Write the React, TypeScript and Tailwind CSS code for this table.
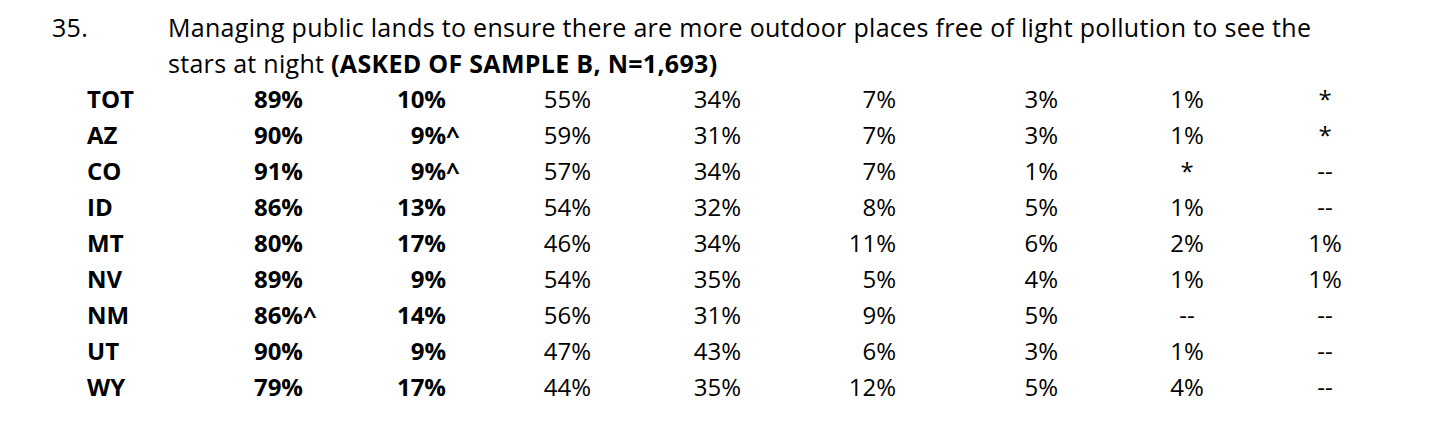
import React from "react";

type Row = { label: string; v: string[] };

const rows: Row[] = [
  { label: "TOT", v: ["89%", "10%", "55%", "34%", "7%", "3%", "1%", "*"] },
  { label: "AZ", v: ["90%", "9%^", "59%", "31%", "7%", "3%", "1%", "*"] },
  { label: "CO", v: ["91%", "9%^", "57%", "34%", "7%", "1%", "*", "--"] },
  { label: "ID", v: ["86%", "13%", "54%", "32%", "8%", "5%", "1%", "--"] },
  { label: "MT", v: ["80%", "17%", "46%", "34%", "11%", "6%", "2%", "1%"] },
  { label: "NV", v: ["89%", "9%", "54%", "35%", "5%", "4%", "1%", "1%"] },
  { label: "NM", v: ["86%^", "14%", "56%", "31%", "9%", "5%", "--", "--"] },
  { label: "UT", v: ["90%", "9%", "47%", "43%", "6%", "3%", "1%", "--"] },
  { label: "WY", v: ["79%", "17%", "44%", "35%", "12%", "5%", "4%", "--"] },
];

function Val({ text }: { text: string }) {
  if (text.endsWith("^")) {
    return (
      <span>
        {text.slice(0, -1)}
        <span className="inline-block w-0">^</span>
      </span>
    );
  }
  return <span>{text}</span>;
}

export default function App() {
  return (
    <div
      className="w-[1432px] h-[425px] bg-white text-black pt-[9px] text-[24px] leading-[36px]"
      style={{ fontFamily: '"Open Sans", "Noto Sans", sans-serif' }}
    >
      <div className="flex text-[25px] tracking-[0.3px]">
        <div className="w-[168px] pl-[52px] shrink-0">35.</div>
        <div className="whitespace-nowrap">
          Managing public lands to ensure there are more outdoor places free of light pollution to see the
          <br />
          stars at night <span className="font-bold">(ASKED OF SAMPLE B, N=1,693)</span>
        </div>
      </div>
      <div className="pl-[87px]">
        {rows.map((r) => (
          <div
            key={r.label}
            className="grid h-[36px] grid-cols-[113px_103px_143px_145px_150px_155px_162px_258px_18px]"
          >
            <div className="font-bold">{r.label}</div>
            <div className="font-bold text-right">
              <Val text={r.v[0]} />
            </div>
            <div className="font-bold text-right">
              <Val text={r.v[1]} />
            </div>
            <div className="text-right">{r.v[2]}</div>
            <div className="text-right">{r.v[3]}</div>
            <div className="text-right">{r.v[4]}</div>
            <div className="text-right">{r.v[5]}</div>
            <div className="flex justify-center">{r.v[6]}</div>
            <div className="flex justify-center">{r.v[7]}</div>
          </div>
        ))}
      </div>
    </div>
  );
}
